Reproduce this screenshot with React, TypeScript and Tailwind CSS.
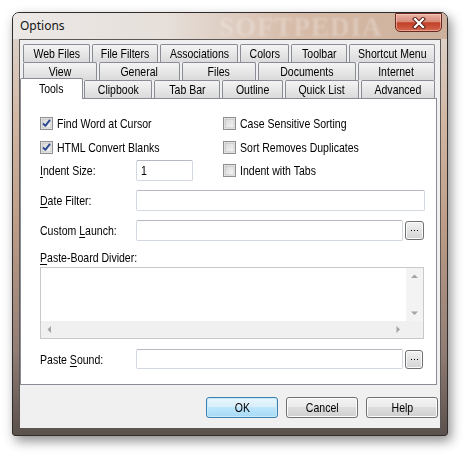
import React from 'react';

const narrow = "font-['Liberation_Sans','Arial',sans-serif] text-[13px] leading-none text-black";

// the dialog font is a tall, narrow sans; squeeze Liberation Sans to its width
function T({ children, center }: { children: React.ReactNode; center?: boolean }) {
  return (
    <span
      className={`inline-block whitespace-nowrap scale-x-[0.81] ${center ? 'origin-center' : 'origin-left'}`}
    >
      {children}
    </span>
  );
}

const row1 = [
  { label: 'Web Files', w: 'w-[67px]' },
  { label: 'File Filters', w: 'w-[66px]' },
  { label: 'Associations', w: 'w-[78px]' },
  { label: 'Colors', w: 'w-[49px]' },
  { label: 'Toolbar', w: 'w-[56px]' },
  { label: 'Shortcut Menu', w: 'w-[86px]' },
];

const row2 = [
  { label: 'View', w: 'w-[74px]' },
  { label: 'General', w: 'w-[81px]' },
  { label: 'Files', w: 'w-[74px]' },
  { label: 'Documents', w: 'w-[98px]' },
  { label: 'Internet', w: 'w-[77px]' },
];

const row3 = [
  { label: 'Clipbook', w: 'w-[68px]' },
  { label: 'Tab Bar', w: 'w-[66px]' },
  { label: 'Outline', w: 'w-[61px]' },
  { label: 'Quick List', w: 'w-[74px]' },
  { label: 'Advanced', w: 'w-[74px]' },
];

function Tab({ label, w }: { label: string; w: string }) {
  return (
    <div
      className={`${w} h-[18px] shrink-0 flex items-center justify-center rounded-t-[2px] border border-b-0 border-[#898c95] bg-linear-to-b from-[#f4f4f4] to-[#dadada] ${narrow}`}
    >
      <T center>{label}</T>
    </div>
  );
}

function Checkbox({ checked }: { checked?: boolean }) {
  return (
    <svg width="13" height="13" viewBox="0 0 13 13" className="shrink-0">
      <defs>
        <linearGradient id="cbg" x1="0" y1="0" x2="1" y2="1">
          <stop offset="0" stopColor="#d6d6d6" />
          <stop offset="1" stopColor="#f8f8f8" />
        </linearGradient>
      </defs>
      <rect x="0.5" y="0.5" width="12" height="12" fill="#f4f4f4" stroke="#8e8f8f" />
      <rect x="2" y="2" width="9" height="9" fill="url(#cbg)" stroke="#aeb0b2" strokeWidth="0.6" />
      {checked && (
        <path d="M3 6.3 L5.3 8.8 L10 2.8" fill="none" stroke="#2a4a8e" strokeWidth="1.9" strokeLinejoin="round" />
      )}
    </svg>
  );
}

function CheckRow({ label, checked }: { label: string; checked?: boolean }) {
  return (
    <div className="h-[24px] flex items-center gap-[4px]">
      <Checkbox checked={checked} />
      <span className={narrow}>
        <T>{label}</T>
      </span>
    </div>
  );
}

function TextBox({ w, h = 'h-[21px]', value }: { w: string; h?: string; value?: string }) {
  return (
    <div
      className={`${w} ${h} shrink-0 rounded-[2px] border border-[#d3d9e1] border-t-[#b5bac2] bg-white flex items-center pl-[4px] ${narrow}`}
    >
      {value && <T>{value}</T>}
    </div>
  );
}

function Browse({ h = 'h-[19px]', w = 'w-[19px]' }: { h?: string; w?: string }) {
  return (
    <div
      className={`${w} ${h} ml-[2px] shrink-0 rounded-[3px] border border-[#707070] bg-linear-to-b from-[#f2f2f2] to-[#d4d4d4] shadow-[inset_0_0_0_1px_#fbfbfb] flex items-center justify-center gap-[2px]`}
    >
      <i className="w-[1px] h-[1px] bg-black" />
      <i className="w-[1px] h-[1px] bg-black" />
      <i className="w-[1px] h-[1px] bg-black" />
    </div>
  );
}

function Label({ pre, u, post }: { pre?: string; u: string; post: string }) {
  return (
    <span className={`w-[96px] shrink-0 ${narrow}`}>
      <T>
        {pre}
        <span className="underline underline-offset-[2px]">{u}</span>
        {post}
      </T>
    </span>
  );
}

function Arrow({ dir }: { dir: 'up' | 'down' | 'left' | 'right' }) {
  const d = {
    up: 'M0 4 L3.5 0.5 L7 4 Z',
    down: 'M0 0.5 L7 0.5 L3.5 4 Z',
    left: 'M4 0 L0.5 3.5 L4 7 Z',
    right: 'M0.5 0 L4 3.5 L0.5 7 Z',
  }[dir];
  const vertical = dir === 'up' || dir === 'down';
  return (
    <svg width={vertical ? 7 : 4} height={vertical ? 4 : 7} viewBox={vertical ? '0 0 7 4' : '0 0 4 7'}>
      <path d={d} fill="#a4a4a4" />
    </svg>
  );
}

function DialogButton({ label, focused }: { label: string; focused?: boolean }) {
  return (
    <div
      className={`w-[72px] h-[21px] rounded-[3px] border flex items-center justify-center ${narrow} ${
        focused
          ? 'border-[#3c7fb1] bg-[linear-gradient(to_bottom,#e8f5fc_0%,#d9effa_45%,#bee6fd_50%,#a7d9f5_100%)] shadow-[inset_0_0_0_1px_#c9eafa]'
          : 'border-[#707070] bg-[linear-gradient(to_bottom,#f2f2f2_0%,#ebebeb_45%,#dddddd_50%,#cfcfcf_100%)] shadow-[inset_0_0_0_1px_#fcfcfc]'
      }`}
    >
      <T center>{label}</T>
    </div>
  );
}

export default function App() {
  return (
    <div className="w-[468px] h-[456px] bg-white overflow-hidden pt-[12px] pl-[12px]">
      <div className="relative w-[436px] h-[424px] flex flex-col rounded-t-[7px] rounded-b-[3px] border border-[#2f2c2b] bg-[linear-gradient(to_bottom,#e0d8d2_0%,#d1b7a4_25%,#bd9d88_50%,#927e75_80%,#5a504c_100%)] shadow-[3px_5px_12px_rgba(0,0,0,0.45)]">
        {/* title bar */}
        <div className="relative h-[26px] shrink-0 rounded-t-[6px] bg-[linear-gradient(to_right,#ebe8e6_0%,#e6dfda_35%,#d6bba8_65%,#cdb09b_100%)] flex items-center pl-[7px]">
          <span className="font-['Noto_Sans',sans-serif] text-[12px] leading-none text-[#141414]">Options</span>
          {/* faint watermark on the glass */}
          <span className="absolute left-[206px] top-[1px] font-['Liberation_Serif',serif] font-bold text-[27px] leading-none tracking-[1px] text-white/25 blur-[1px]">
            SOFTPEDIA
          </span>
        </div>

        {/* close button */}
        <div className="absolute top-0 right-[5px] w-[47px] h-[19px] rounded-b-[5px] rounded-t-[1px] border border-[#6b2a1f] bg-[linear-gradient(to_bottom,#ebb3a5_0%,#d98a78_45%,#c23f28_52%,#d2664d_100%)] shadow-[inset_0_0_0_1px_rgba(255,220,210,0.5)] flex items-center justify-center">
          <svg width="14" height="12" viewBox="0 0 14 12">
            <path d="M3 2 L11 10 M11 2 L3 10" stroke="#5a241b" strokeWidth="4.2" strokeLinecap="square" />
            <path d="M3 2 L11 10 M11 2 L3 10" stroke="#ffffff" strokeWidth="2.2" strokeLinecap="square" />
          </svg>
        </div>

        {/* client */}
        <div className="mx-[6px] mb-[6px] flex-1 flex flex-col border border-[#5c5654] bg-[#f0f0f0]">
          <div className="pt-[4px]">
            <div className="flex gap-[2px] pl-[3px]">
              {row1.map((t) => (
                <Tab key={t.label} {...t} />
              ))}
            </div>
            <div className="flex gap-[2px] pl-[3px]">
              {row2.map((t) => (
                <Tab key={t.label} {...t} />
              ))}
            </div>
            <div className="flex items-end h-[18px]">
              <div className={`relative z-10 w-[63px] h-[21px] -mb-[1px] mr-[1px] shrink-0 flex items-start justify-center pt-[3px] rounded-t-[2px] border border-b-0 border-[#898c95] bg-white ${narrow}`}>
                <T center>Tools</T>
              </div>
              <div className="flex gap-[2px]">
                {row3.map((t) => (
                  <Tab key={t.label} {...t} />
                ))}
              </div>
            </div>

            {/* tab page */}
            <div className="w-[417px] h-[287px] border border-[#898c95] bg-white pl-[19px] pt-[12px]">
              <div className="flex">
                <div className="w-[183px]">
                  <CheckRow label="Find Word at Cursor" checked />
                  <CheckRow label="HTML Convert Blanks" checked />
                  <div className="h-[23px] flex items-center">
                    <Label u="I" post="ndent Size:" />
                    <TextBox w="w-[57px]" value="1" />
                  </div>
                </div>
                <div>
                  <CheckRow label="Case Sensitive Sorting" />
                  <CheckRow label="Sort Removes Duplicates" />
                  <div className="h-[23px] flex items-center gap-[4px]">
                    <Checkbox />
                    <span className={narrow}>
                      <T>Indent with Tabs</T>
                    </span>
                  </div>
                </div>
              </div>

              <div className="mt-[8px] flex items-center">
                <Label u="D" post="ate Filter:" />
                <TextBox w="w-[289px]" />
              </div>

              <div className="mt-[9px] flex items-center">
                <Label pre="Custom " u="L" post="aunch:" />
                <TextBox w="w-[267px]" />
                <Browse />
              </div>

              <div className={`mt-[10px] h-[14px] ${narrow}`}>
                <T>
                  <span className="underline underline-offset-[2px]">P</span>aste-Board Divider:
                </T>
              </div>

              <div className="mt-[2px] w-[384px] h-[72px] border border-[#c9c9c9] bg-white grid grid-cols-[1fr_17px] grid-rows-[1fr_17px]">
                <div />
                <div className="bg-[#f3f3f3] flex flex-col items-center justify-between py-[6px]">
                  <Arrow dir="up" />
                  <Arrow dir="down" />
                </div>
                <div className="bg-[#f0f0f0] flex items-center justify-between px-[6px]">
                  <Arrow dir="left" />
                  <Arrow dir="right" />
                </div>
                <div className="bg-[#f0f0f0]" />
              </div>

              <div className="mt-[10px] flex items-center">
                <Label pre="Paste " u="S" post="ound:" />
                <TextBox w="w-[267px]" h="h-[20px]" />
                <Browse w="w-[18px]" />
              </div>
            </div>
          </div>

          {/* buttons */}
          <div className="flex justify-end gap-[8px] pr-[2px] pt-[12px]">
            <DialogButton label="OK" focused />
            <DialogButton label="Cancel" />
            <DialogButton label="Help" />
          </div>
        </div>
      </div>
    </div>
  );
}
